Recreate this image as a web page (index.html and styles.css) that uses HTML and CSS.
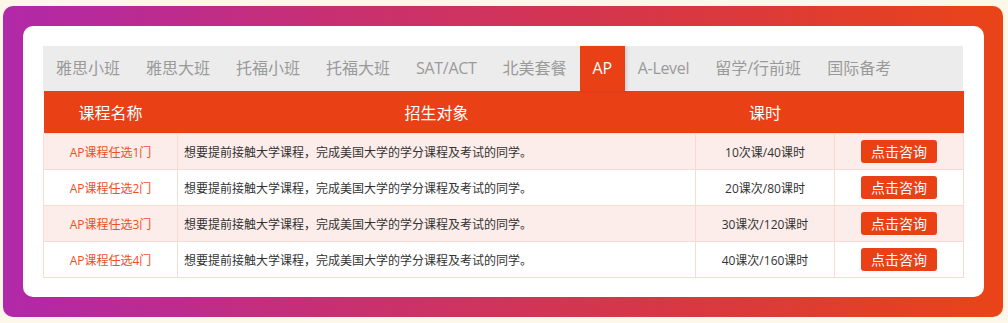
FILE: index.html
```html
<!DOCTYPE html>
<html lang="zh-CN">
<head>
<meta charset="utf-8">
<link rel="stylesheet" href="styles.css">
</head>
<body>
<div class="frame">
  <div class="card">
    <ul class="tabs">
      <li>雅思小班</li>
      <li>雅思大班</li>
      <li>托福小班</li>
      <li>托福大班</li>
      <li class="latin">SAT/ACT</li>
      <li>北美套餐</li>
      <li class="latin active">AP</li>
      <li class="latin">A-Level</li>
      <li>留学/行前班</li>
      <li>国际备考</li>
    </ul>
    <table class="courses">
      <colgroup>
        <col class="c1"><col class="c2"><col class="c3"><col class="c4">
      </colgroup>
      <thead>
        <tr><th>课程名称</th><th>招生对象</th><th>课时</th><th></th></tr>
      </thead>
      <tbody>
        <tr><td class="name">AP课程任选1门</td><td class="desc">想要提前接触大学课程，完成美国大学的学分课程及考试的同学。</td><td>10次课/40课时</td><td><a class="btn">点击咨询</a></td></tr>
        <tr><td class="name">AP课程任选2门</td><td class="desc">想要提前接触大学课程，完成美国大学的学分课程及考试的同学。</td><td>20课次/80课时</td><td><a class="btn">点击咨询</a></td></tr>
        <tr><td class="name">AP课程任选3门</td><td class="desc">想要提前接触大学课程，完成美国大学的学分课程及考试的同学。</td><td>30课次/120课时</td><td><a class="btn">点击咨询</a></td></tr>
        <tr><td class="name">AP课程任选4门</td><td class="desc">想要提前接触大学课程，完成美国大学的学分课程及考试的同学。</td><td>40课次/160课时</td><td><a class="btn">点击咨询</a></td></tr>
      </tbody>
    </table>
  </div>
</div>
</body>
</html>
```

FILE: styles.css
```css
html, body {
  margin: 0;
  padding: 0;
}
body {
  background: #fdf7ea;
  font-family: "Open Sans", "Noto Sans CJK SC", sans-serif;
  width: 1008px;
  height: 323px;
  overflow: hidden;
}
.frame {
  box-sizing: border-box;
  margin: 6px 0 0 3px;
  width: 1000px;
  height: 311px;
  padding: 20px;
  border-radius: 10px;
  background: linear-gradient(90deg, #b128a9 0%, #c9306f 35%, #d9383f 70%, #ea4418 100%);
}
.card {
  box-sizing: border-box;
  width: 961px;
  height: 271px;
  padding: 20px;
  background: #fff;
  border-radius: 10px;
}
.tabs {
  list-style: none;
  margin: 0;
  padding: 0;
  display: flex;
  width: 920px;
  height: 45px;
  background: #ececec;
}
.tabs li {
  padding: 0 13px;
  line-height: 45px;
  font-size: 16px;
  color: #9a9a9a;
  white-space: nowrap;
}
.tabs li.latin {
  letter-spacing: -0.3px;
}
.tabs li.active {
  background: #e94015;
  color: #fff;
  box-shadow: 2px 0 3px rgba(0,0,0,0.12);
}
.courses {
  width: 920px;
  border-collapse: collapse;
  table-layout: fixed;
  font-size: 12px;
  color: #333;
}
.c1 { width: 134px; }
.c2 { width: 518px; }
.c3 { width: 139px; }
.c4 { width: 129px; }
.courses th {
  background: #e94015;
  color: #fff;
  font-weight: normal;
  font-size: 16px;
  height: 42px;
  padding: 0;
  text-align: center;
}
.courses td {
  border: 1px solid #f8dcd2;
  height: 35px;
  padding: 0;
  text-align: center;
}
.courses tbody tr:nth-child(odd) td {
  background: #fcedea;
}
.courses td.name {
  color: #ee4f22;
}
.courses td.desc {
  text-align: left;
  padding-left: 6px;
}
.btn {
  display: inline-block;
  width: 76px;
  height: 23px;
  line-height: 23px;
  border-radius: 3px;
  background: #e94015;
  color: #fff;
  font-size: 14px;
  vertical-align: middle;
}
```
